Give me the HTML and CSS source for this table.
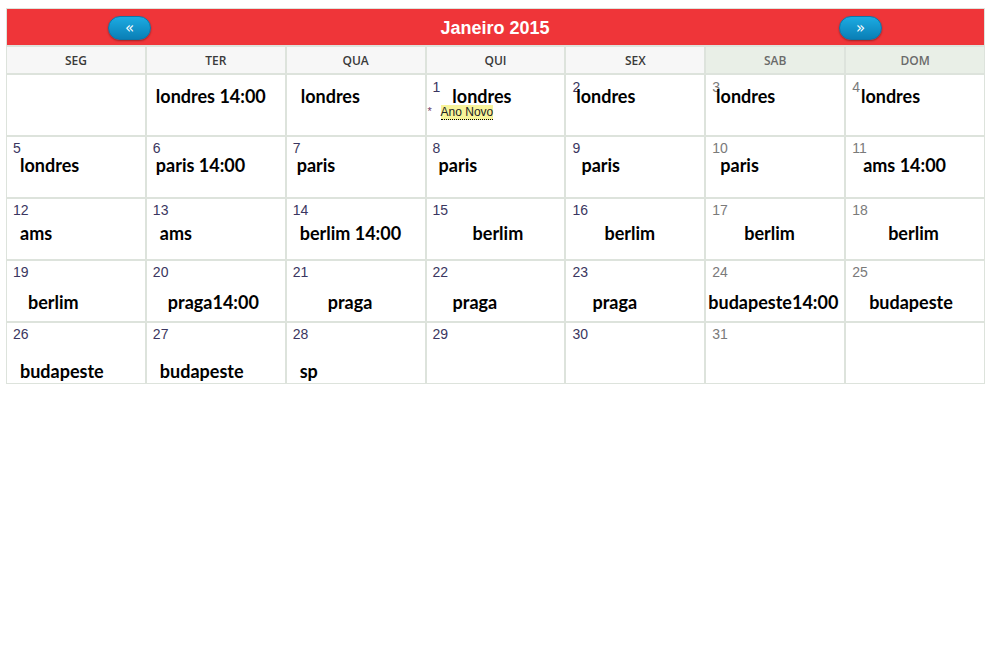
FILE: index.html
```html
<!DOCTYPE html>
<html lang="pt">
<head>
<meta charset="utf-8">
<title>Janeiro 2015</title>
<link rel="stylesheet" href="styles.css">
</head>
<body>
<div class="calendar">
  <div class="bar">
    <button class="nav">&laquo;</button>
    <div class="title">Janeiro 2015</div>
    <button class="nav">&raquo;</button>
  </div>
  <div class="grid">
    <div class="dow">SEG</div>
    <div class="dow">TER</div>
    <div class="dow">QUA</div>
    <div class="dow">QUI</div>
    <div class="dow">SEX</div>
    <div class="dow we">SAB</div>
    <div class="dow we">DOM</div>

    <div class="cell first"></div>
    <div class="cell first"><span class="ev lead" style="margin-left:3px">londres 14:00</span></div>
    <div class="cell first"><span class="ev lead" style="margin-left:8px">londres</span></div>
    <div class="cell first"><span class="n">1</span><span class="ev" style="margin-left:12px">londres</span>
      <div class="hol"><span class="star">*</span><span class="tag">Ano Novo</span></div></div>
    <div class="cell first"><span class="n">2</span><span class="ev" style="margin-left:-4px">londres</span></div>
    <div class="cell first"><span class="n grey">3</span><span class="ev" style="margin-left:-4px">londres</span></div>
    <div class="cell first"><span class="n grey">4</span><span class="ev" style="margin-left:1px">londres</span></div>

    <div class="cell r2"><span class="n">5</span><span class="ev" style="margin-left:7px">londres</span></div>
    <div class="cell r2"><span class="n">6</span><span class="ev" style="margin-left:3px">paris 14:00</span></div>
    <div class="cell r2"><span class="n">7</span><span class="ev" style="margin-left:4px">paris</span></div>
    <div class="cell r2"><span class="n">8</span><span class="ev" style="margin-left:6px">paris</span></div>
    <div class="cell r2"><span class="n">9</span><span class="ev" style="margin-left:9px">paris</span></div>
    <div class="cell r2"><span class="n grey">10</span><span class="ev" style="margin-left:8px">paris</span></div>
    <div class="cell r2"><span class="n grey">11</span><span class="ev" style="margin-left:11px">ams 14:00</span></div>

    <div class="cell r3"><span class="n">12</span><span class="ev" style="margin-left:7px">ams</span></div>
    <div class="cell r3"><span class="n">13</span><span class="ev" style="margin-left:7px">ams</span></div>
    <div class="cell r3"><span class="n">14</span><span class="ev" style="margin-left:7px">berlim 14:00</span></div>
    <div class="cell r3"><span class="n">15</span><span class="ev" style="margin-left:40px">berlim</span></div>
    <div class="cell r3"><span class="n">16</span><span class="ev" style="margin-left:32px">berlim</span></div>
    <div class="cell r3"><span class="n grey">17</span><span class="ev" style="margin-left:32px">berlim</span></div>
    <div class="cell r3"><span class="n grey">18</span><span class="ev" style="margin-left:36px">berlim</span></div>

    <div class="cell r4"><span class="n">19</span><span class="ev" style="margin-left:15px">berlim</span></div>
    <div class="cell r4"><span class="n">20</span><span class="ev" style="margin-left:15px">praga14:00</span></div>
    <div class="cell r4"><span class="n">21</span><span class="ev" style="margin-left:35px">praga</span></div>
    <div class="cell r4"><span class="n">22</span><span class="ev" style="margin-left:20px">praga</span></div>
    <div class="cell r4"><span class="n">23</span><span class="ev" style="margin-left:20px">praga</span></div>
    <div class="cell r4"><span class="n grey">24</span><span class="ev" style="margin-left:-4px">budapeste14:00</span></div>
    <div class="cell r4"><span class="n grey">25</span><span class="ev" style="margin-left:17px">budapeste</span></div>

    <div class="cell r5"><span class="n">26</span><span class="ev" style="margin-left:7px">budapeste</span></div>
    <div class="cell r5"><span class="n">27</span><span class="ev" style="margin-left:7px">budapeste</span></div>
    <div class="cell r5"><span class="n">28</span><span class="ev" style="margin-left:7px">sp</span></div>
    <div class="cell r5"><span class="n">29</span></div>
    <div class="cell r5"><span class="n">30</span></div>
    <div class="cell r5"><span class="n grey">31</span></div>
    <div class="cell r5"></div>
  </div>
</div>
</body>
</html>
```
FILE: styles.css
```css
html, body {
  margin: 0;
  padding: 0;
  background: #ffffff;
}

body {
  font-family: "Liberation Sans", Arial, sans-serif;
}

.calendar {
  width: 977px;
  margin: 8px 0 0 6px;
  border: 1px solid #dde3dc;
  background: #dde3dc;
}

.bar {
  height: 36px;
  background: #ef3539;
  display: flex;
  align-items: center;
  justify-content: space-between;
  padding: 0 102px 0 101px;
}

.title {
  color: #ffffff;
  font-weight: bold;
  font-size: 18px;
  margin-top: 2px;
}

.nav {
  width: 43px;
  height: 24px;
  border-radius: 12px;
  border: 1px solid #0d76a8;
  background: linear-gradient(#1cabe2, #0a7fb6);
  box-shadow: 0 1px 2px rgba(0, 0, 0, 0.35);
  color: #ffffff;
  font-family: "DejaVu Sans", sans-serif;
  font-size: 15px;
  line-height: 20px;
  padding: 0;
  margin-top: 1px;
}

.grid {
  margin-top: 1px;
  display: grid;
  grid-template-columns: repeat(7, 1fr);
  grid-template-rows: 26px repeat(5, 60px);
  gap: 2px;
  padding-top: 1px;
}

.dow {
  background: #f7f7f7;
  display: flex;
  align-items: center;
  justify-content: center;
  font-family: "Open Sans", sans-serif;
  font-weight: 600;
  font-size: 12px;
  color: #3a3a3a;
}

.dow.we {
  background: #e9efe7;
  color: #6a6a6a;
}

.cell {
  background: #ffffff;
  padding: 3px 0 0 6px;
}

.n {
  display: block;
  font-size: 14px;
  line-height: 16px;
  color: #3a3660;
}

.n.grey {
  color: #7a7a7a;
}

.ev {
  font-family: "Lato", sans-serif;
  font-weight: 700;
  font-size: 18px;
  line-height: 22px;
  color: #000000;
}

.cell.first .n {
  display: inline-block;
  vertical-align: top;
  margin-top: 1px;
}

.cell.first .ev {
  display: inline-block;
  margin-top: 7px;
  vertical-align: top;
}

.r2 .ev, .r3 .ev, .r4 .ev, .r5 .ev {
  display: block;
}

.r2 .ev { margin-top: -2px; }
.r3 .ev { margin-top: 4px; }
.r4 .ev { margin-top: 11px; }
.r5 .ev { margin-top: 18px; }

.hol {
  display: flex;
  align-items: flex-start;
  margin-top: -2px;
  margin-left: -6px;
  font-size: 12px;
}

.star {
  color: #6a3a6a;
  font-size: 11px;
  width: 13px;
  padding-left: 1px;
}

.tag {
  background: #f8f49a;
  color: #222222;
  line-height: 14px;
  border-bottom: 1px dotted #000000;
}
```
